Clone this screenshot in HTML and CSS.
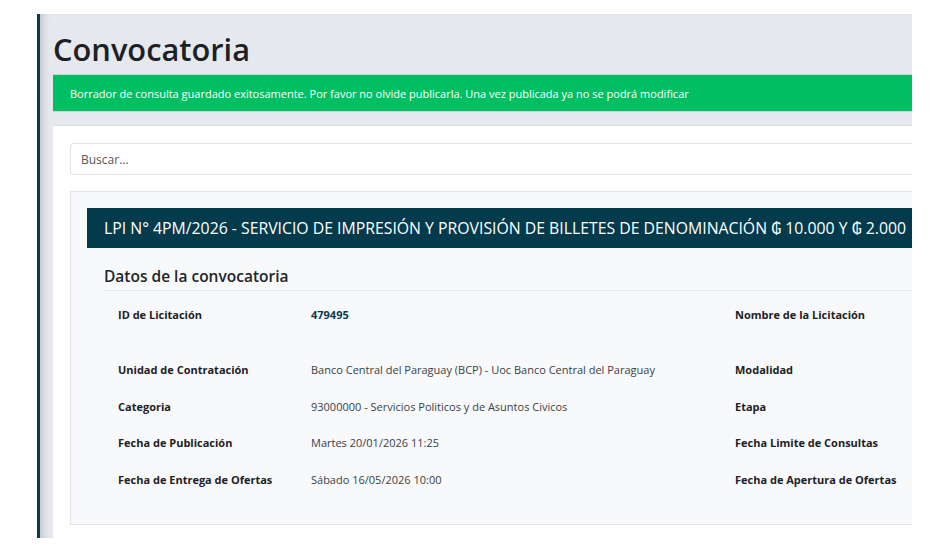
FILE: index.html
```html
<!DOCTYPE html>
<html lang="es">
<head>
    <meta charset="UTF-8">
    <meta name="viewport" content="width=device-width, initial-scale=1.0">
    <title>Convocatoria</title>
    <link rel="stylesheet" href="styles.css">
</head>
<body>
    <div class="frame">
        <h1 class="page_title">Convocatoria</h1>
        <div class="alert_ok">Borrador de consulta guardado exitosamente. Por favor no olvide publicarla. Una vez publicada ya no se podrá modificar</div>
        <div class="card">
            <input class="search" type="text" placeholder="Buscar...">
            <div class="item">
                <div class="item_head">LPI N° 4PM/2026 - SERVICIO DE IMPRESIÓN Y PROVISIÓN DE BILLETES DE DENOMINACIÓN ₲ 10.000 Y ₲ 2.000</div>
                <div class="item_body">
                    <h2 class="sub_title">Datos de la convocatoria</h2>
                    <div class="datos">
                        <div class="row first">
                            <span class="lbl">ID de Licitación</span>
                            <span class="val id">479495</span>
                            <span class="lbl">Nombre de la Licitación</span>
                            <span class="val"></span>
                        </div>
                        <div class="row">
                            <span class="lbl">Unidad de Contratación</span>
                            <span class="val">Banco Central del Paraguay (BCP) - Uoc Banco Central del Paraguay</span>
                            <span class="lbl">Modalidad</span>
                            <span class="val"></span>
                        </div>
                        <div class="row">
                            <span class="lbl">Categoria</span>
                            <span class="val">93000000 - Servicios Politicos y de Asuntos Civicos</span>
                            <span class="lbl">Etapa</span>
                            <span class="val"></span>
                        </div>
                        <div class="row">
                            <span class="lbl">Fecha de Publicación</span>
                            <span class="val">Martes 20/01/2026 11:25</span>
                            <span class="lbl">Fecha Limite de Consultas</span>
                            <span class="val"></span>
                        </div>
                        <div class="row">
                            <span class="lbl">Fecha de Entrega de Ofertas</span>
                            <span class="val">Sábado 16/05/2026 10:00</span>
                            <span class="lbl">Fecha de Apertura de Ofertas</span>
                            <span class="val"></span>
                        </div>
                    </div>
                </div>
            </div>
        </div>
    </div>
</body>
</html>
```

FILE: styles.css
```css
body,h1,h2,div { margin:0; padding:0; }
body { background: #fff; font-family: "Open Sans", "DejaVu Sans", sans-serif; color: #212529; }

/* marco recortado de la captura */
.frame { width: 859px; height: 524px; margin: 14px 0 0 37px; border-left: 3px solid #0b3a4e; background: #e5e8ec; padding-left: 13px; overflow: hidden; box-shadow: inset 8px 0 8px -6px rgba(0,0,0,.18); }
.page_title { font-size: 30.8px; font-weight: 600; line-height: 36px; padding: 17px 0 7px; color: #1d2125; }

.alert_ok { background: #00bf63; color: #fff; font-size: 11px; height: 38px; line-height: 38px; padding-left: 17px; border-top: 1px solid #cfd4d9; border-bottom: 1px solid #cfd4d9; box-sizing: border-box; white-space: nowrap; }

.card { margin-top: 13px; background: #fff; padding: 17px; padding-right: 0; border-top: 1px solid #d8dce0; height: 420px; }
.search { display: block; width: 100%; box-sizing: border-box; height: 32px; border: 1px solid #dfe2e6; border-right: none; border-radius: 4px 0 0 4px; padding: 0 10px; font-family: inherit; font-size: 12px; color: #495057; outline: none; }
.search::placeholder { color: #555; }

.item { margin-top: 16px; background: #f8f9fa; border: 1px solid #dfe2e6; border-right: none; padding: 16px 0 0 16px; height: 316px; }
.item_head { background: #033a4c; color: #fff; height: 40px; line-height: 40px; font-size: 15.8px; padding-left: 17px; white-space: nowrap; }
.item_body { padding: 0 0 0 17px; }
.sub_title { font-size: 15.5px; font-weight: 600; line-height: 20px; padding: 18px 0 4px; border-bottom: 1px solid #e6e8eb; color: #212529; }

.datos { padding: 17px 0 0 14px; }
.row { display: grid; grid-template-columns: 193px 424px 180px 1fr; height: 36.7px; font-size: 11px; }
.row.first { height: 55px; }
.row span { line-height: 14px; }
.lbl { font-weight: 700; color: #1d2125; }
.val { color: #3a3f44; }
.val.id { font-weight: 700; color: #0b3a4e; }
```
